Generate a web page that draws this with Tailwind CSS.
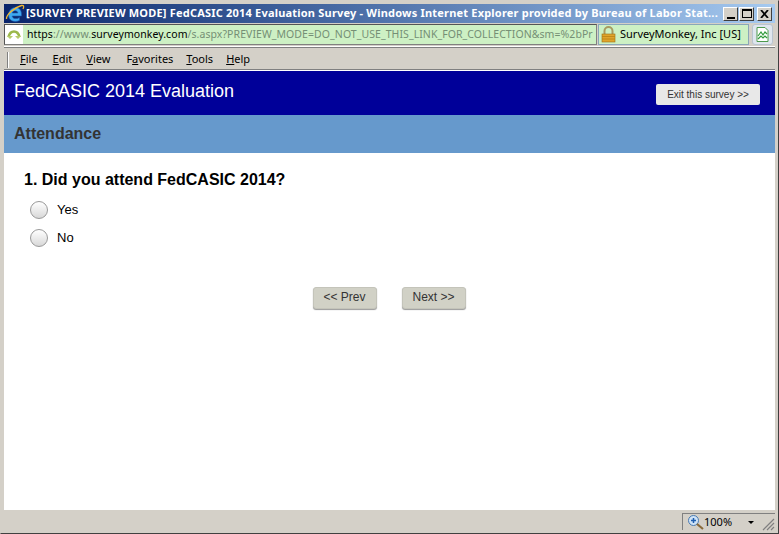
<!DOCTYPE html>
<html lang="en">
<head>
    <meta charset="UTF-8">
    <title>[SURVEY PREVIEW MODE] FedCASIC 2014 Evaluation Survey</title>
    <script src="https://cdn.jsdelivr.net/npm/@tailwindcss/browser@4"></script>
</head>
<body class="w-[779px] h-[534px] overflow-hidden bg-[#d4d0c8] font-['Liberation_Sans',sans-serif]">
    <div class="w-full h-full flex flex-col border border-t-[#d4d0c8] border-l-[#d4d0c8] border-r-[#404040] border-b-[#404040]">
        <!-- title bar -->
        <header class="mt-[3px] mx-[3px] h-[19px] shrink-0 flex items-center overflow-hidden bg-gradient-to-r from-[#0a246a] to-[#a6caf0]">
            <svg class="w-[20px] h-[19px] ml-[1px] shrink-0" viewBox="0 0 20 19">
                <path d="M3.500 11C3.500 6.500 7 3.500 10.500 3.500c4 0 6 3 6 7v1.500H7.200c.2 2.700 4 3.500 7.300 1.400v3c-5 2.500-11 .5-11-5.400zM7.300 9h5.500c-.2-3-5-3-5.500 0z" fill="#3fa9f0" stroke="#1557b0" stroke-width=".6"/>
                <path d="M1.500 15C1 11 9 3.500 16.500 1.500c2.200-.5 2.800 1 1.500 3.500" fill="none" stroke="#f2b830" stroke-width="1.300"/>
            </svg>
            <span class="ml-[1px] whitespace-nowrap text-white font-bold text-[11px] tracking-[0.2px] font-['Noto_Sans',sans-serif]">[SURVEY PREVIEW MODE] FedCASIC 2014 Evaluation Survey - Windows Internet Explorer provided by Bureau of Labor Stat...</span>
            <div class="ml-auto flex gap-[1px] mr-[3px] shrink-0">
                <div class="w-[15px] h-[14px] bg-[#d4d0c8] border border-t-white border-l-white border-r-[#404040] border-b-[#404040] flex items-end justify-center pb-[1px]"><div class="w-[8px] h-[2px] bg-black"></div></div>
                <div class="w-[15px] h-[14px] bg-[#d4d0c8] border border-t-white border-l-white border-r-[#404040] border-b-[#404040] flex items-center justify-center"><div class="w-[10px] h-[9px] border border-black border-t-2"></div></div>
                <div class="w-[15px] h-[14px] ml-[2px] bg-[#d4d0c8] border border-t-white border-l-white border-r-[#404040] border-b-[#404040] flex items-center justify-center">
                    <svg class="w-[9px] h-[8px]" viewBox="0 0 9 8"><path d="M1 0l7 8M8 0L1 8" stroke="#000" stroke-width="1.800"/></svg>
                </div>
            </div>
        </header>
        <!-- address bar -->
        <div class="h-[24px] shrink-0 mx-[3px] flex items-center gap-[1px] border-b border-b-white">
            <div class="w-[593px] h-[21px] flex items-center bg-[#cdf0c4] border border-[#808080] border-t-[#555] border-l-[#555] overflow-hidden whitespace-nowrap text-[10.5px] tracking-[0.07px] font-['Noto_Sans',sans-serif]">
                <div class="w-[18px] h-[19px] bg-white flex items-center justify-center shrink-0">
                    <svg class="w-[14px] h-[12px]" viewBox="0 0 14 12"><path d="M1.500 8C2.500 4 5 2.500 7 2.500S11.500 4 12.500 8" fill="none" stroke="#9bb84a" stroke-width="2.600"/><path d="M0 7l3 3 3-3zM8 7l3 3 3-3z" fill="#b8cc6c"/></svg>
                </div>
                <span class="ml-[4px] text-[#758f75]"><span class="text-black">https</span>://www.<span class="text-black">surveymonkey.com</span>/s.aspx?PREVIEW_MODE=DO_NOT_USE_THIS_LINK_FOR_COLLECTION&amp;sm=%2bPr</span>
            </div>
            <div class="w-[151px] h-[21px] flex items-center bg-[#cdf0c4] border border-[#8aa6b8] text-[11px] whitespace-nowrap text-black shrink-0 font-['Noto_Sans',sans-serif]">
                <svg class="w-[15px] h-[17px] ml-[2px] shrink-0" viewBox="0 0 15 17">
                    <path d="M3.500 8V5a4 4 0 0 1 8 0v3" fill="none" stroke="#a89a60" stroke-width="2"/>
                    <rect x="1" y="8" width="13" height="8" fill="#e0a42c" stroke="#9a6f14" stroke-width=".6"/>
                    <path d="M1 10.500h13M1 13h13" stroke="#b98214" stroke-width=".8"/>
                </svg>
                <span class="ml-[4px]">SurveyMonkey, Inc [US]</span>
            </div>
            <div class="w-[21px] h-[21px] ml-[2px] bg-[#dfe6ee] border border-[#b8c4d0] rounded-[3px] flex items-center justify-center shrink-0">
                <svg class="w-[13px] h-[15px]" viewBox="0 0 13 15">
                    <path d="M1 .5h8l3 3v11H1z" fill="#fff" stroke="#4d9a4d"/>
                    <path d="M2 9l3-4 2 3 2-3 2 2M2 12l3-3 2 2 2-2 2 2" fill="none" stroke="#2f9a3a" stroke-width="1.200"/>
                </svg>
            </div>
        </div>
        <!-- menu bar -->
        <nav class="h-[23px] shrink-0 mx-[3px] flex items-center pt-[2px] border-t border-t-[#808080] border-b border-b-[#808080] text-[11px] text-black whitespace-nowrap font-['Noto_Sans',sans-serif]">
            <div class="w-[2px] h-[16px] ml-[3px] border-l border-l-[#808080] border-r border-r-white"></div>
            <span class="ml-[11px]"><u>F</u>ile</span>
            <span class="ml-[15px]"><u>E</u>dit</span>
            <span class="ml-[14px]"><u>V</u>iew</span>
            <span class="ml-[16px]">F<u>a</u>vorites</span>
            <span class="ml-[13px]"><u>T</u>ools</span>
            <span class="ml-[13px]"><u>H</u>elp</span>
        </nav>
        <!-- page -->
        <main class="flex-1 mx-[3px] bg-white flex flex-col min-h-0 border-t border-t-white">
            <div class="h-[44px] shrink-0 bg-[#000099] flex items-center justify-between pl-[10px] pr-[15px]">
                <h1 class="text-white text-[18px] -mt-[3px]">FedCASIC 2014 Evaluation</h1>
                <button class="w-[104px] h-[21px] mt-[3px] bg-[#e8e8e8] rounded-[2px] text-[#333] text-[10px] text-center">Exit this survey &gt;&gt;</button>
            </div>
            <div class="h-[38px] shrink-0 bg-[#6699cc] flex items-center pl-[10px]">
                <h2 class="text-[#333] font-bold text-[16px]">Attendance</h2>
            </div>
            <div class="pl-[20px] pt-[18px]">
                <h3 class="text-black font-bold text-[16px] leading-[18px]">1. Did you attend FedCASIC 2014?</h3>
                <div class="mt-[12px] ml-[6px] flex flex-col gap-[10px] text-[13px] text-black">
                    <label class="flex items-center h-[18px]">
                        <span class="w-[18px] h-[18px] rounded-full border border-[#999] bg-gradient-to-b from-white to-[#d8d8d8]"></span>
                        <span class="ml-[9px]">Yes</span>
                    </label>
                    <label class="flex items-center h-[18px]">
                        <span class="w-[18px] h-[18px] rounded-full border border-[#999] bg-gradient-to-b from-white to-[#d8d8d8]"></span>
                        <span class="ml-[9px]">No</span>
                    </label>
                </div>
            </div>
            <div class="mt-[40px] flex justify-center gap-[25px] pr-[1px]">
                <button class="w-[64px] h-[22px] pb-[3px] bg-[#d1d1c6] rounded-[3px] border border-[#c4c4ba] shadow-[0_1px_1px_#999] text-[#333] text-[12px]">&lt;&lt; Prev</button>
                <button class="w-[64px] h-[22px] pb-[3px] bg-[#d1d1c6] rounded-[3px] border border-[#c4c4ba] shadow-[0_1px_1px_#999] text-[#333] text-[12px]">Next &gt;&gt;</button>
            </div>
        </main>
        <!-- status bar -->
        <footer class="h-[23px] shrink-0 mx-[3px] flex items-start justify-end text-[11px] text-black font-['Noto_Sans',sans-serif]">
            <div class="w-[93px] h-[17px] mt-[3px] flex items-center border-t border-l border-t-[#808080] border-l-[#808080]">
                <svg class="w-[16px] h-[15px] ml-[5px] shrink-0" viewBox="0 0 16 15">
                    <circle cx="5.500" cy="5.500" r="5" fill="#cfe3f7" stroke="#4a7ab0"/>
                    <path d="M3 5.500h5M5.500 3v5" stroke="#1f5fb0" stroke-width="1.500"/>
                    <path d="M9 9l6 5" stroke="#8a6a3a" stroke-width="2.200"/>
                </svg>
                <span>100%</span>
                <span class="ml-[16px] w-0 h-0 border-l-[3px] border-r-[3px] border-t-[3px] border-l-transparent border-r-transparent border-t-black"></span>
                <svg class="w-[13px] h-[13px] ml-auto mt-[4px] shrink-0" viewBox="0 0 13 13">
                    <path d="M12 1L1 12M12 5l-7 7M12 9l-3 3" stroke="#808080" stroke-width="1.200"/>
                </svg>
            </div>
        </footer>
    </div>
</body>
</html>
